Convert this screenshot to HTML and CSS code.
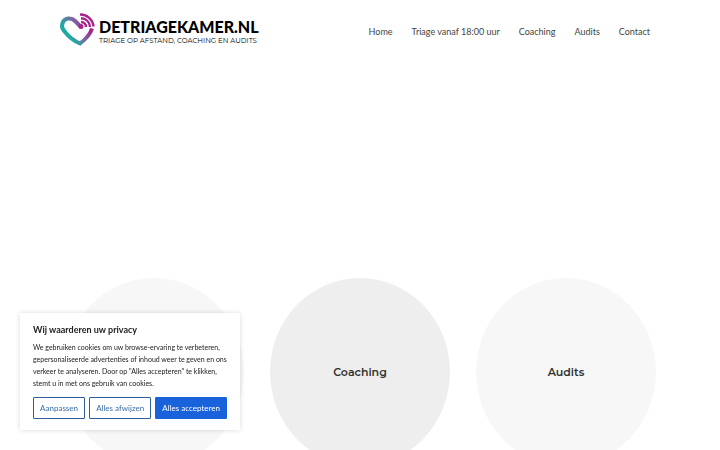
FILE: index.html
```html
<!DOCTYPE html>
<html lang="nl">
<head>
    <meta charset="UTF-8">
    <meta name="viewport" content="width=device-width, initial-scale=1.0">
    <title>Detriagekamer.nl</title>
    <link rel="stylesheet" href="styles.css">
</head>
<body>

    <header class="header">
        <a class="logo" href="#">
            <svg class="logo-icon" viewBox="0 0 40 38" aria-hidden="true">
                <defs>
                    <linearGradient id="heart" gradientUnits="userSpaceOnUse" x1="8" y1="30" x2="32" y2="14">
                        <stop offset="0.2" stop-color="#1fa9a5"/>
                        <stop offset="0.55" stop-color="#7a6ba3"/>
                        <stop offset="0.9" stop-color="#a3238e"/>
                    </linearGradient>
                </defs>
                <path fill="none" stroke="url(#heart)" stroke-width="4" d="M23 17L17 11C13 7 7 8 5 12C3 16 4 19 7 22C11 27 16 31 22 33.500C28 29 32 25 34 18.500"/>
                <g fill="none" stroke="#a8248a" stroke-width="2.400">
                    <path d="M23 12A5 5 0 0 1 28 17"/>
                    <path d="M23 8.200A9 9 0 0 1 32 17"/>
                    <path d="M22 4.500A13 13 0 0 1 35.500 16.500"/>
                </g>
                <circle cx="23" cy="16.500" r="2.500" fill="#a8248a"/>
            </svg>
            <span class="logo-text">
                <span class="logo-name">DETRIAGEKAMER.NL</span>
                <span class="logo-sub">TRIAGE OP AFSTAND, COACHING EN AUDITS</span>
            </span>
        </a>
        <nav class="menu">
            <a href="#">Home</a>
            <a href="#">Triage vanaf 18:00 uur</a>
            <a href="#">Coaching</a>
            <a href="#">Audits</a>
            <a href="#">Contact</a>
        </nav>
    </header>

    <main class="services">
        <a class="circle" href="#" aria-label="Triage"></a>
        <a class="circle circle-dark" href="#"><h2>Coaching</h2></a>
        <a class="circle" href="#"><h2>Audits</h2></a>
    </main>

    <section class="cookie" aria-labelledby="cookie-title">
        <h3 class="cookie-title" id="cookie-title">Wij waarderen uw privacy</h3>
        <p class="cookie-text">We gebruiken cookies om uw browse-ervaring te verbeteren, gepersonaliseerde advertenties of inhoud weer te geven en ons verkeer te analyseren. Door op "Alles accepteren" te klikken, stemt u in met ons gebruik van cookies.</p>
        <div class="cookie-buttons">
            <button class="btn" type="button">Aanpassen</button>
            <button class="btn" type="button">Alles afwijzen</button>
            <button class="btn btn-accept" type="button">Alles accepteren</button>
        </div>
    </section>

</body>
</html>
```
FILE: styles.css
```css
:root{
    --text-color: #444;
    --blue: #1863dc;
}

*{
    box-sizing: border-box;
}

body{
    display: flex;
    flex-direction: column;
    height: 100vh;
    margin: 0;
    background-color: white;
    color: var(--text-color);
    font-family: Lato, sans-serif;
}

h2,h3,p{
    margin: 0;
}

a{
    color: inherit;
    text-decoration: none;
}

.header{
    display: flex;
    justify-content: space-between;
    align-items: center;
    width: 100%;
    max-width: 600px;
    margin: 0 auto;
    padding: 10px 10px 0 0;
}

.logo{
    display: flex;
    color: black;
}

.logo-icon{
    width: 40px;
    height: 38px;
    margin-left: -2px;
}

.logo-text{
    display: flex;
    flex-direction: column;
    padding: 7px 0 0 1px;
    white-space: nowrap;
}

.logo-name{
    font-size: 16px;
    font-weight: 900;
    line-height: 20px;
}

.logo-sub{
    font-family: Montserrat, Lato, sans-serif;
    font-size: 7px;
    line-height: 7px;
}

.menu{
    display: flex;
    gap: 19px;
    padding-top: 5px;
    font-size: 9px;
    line-height: 20px;
    white-space: nowrap;
}

.services{
    display: grid;
    flex: 1;
    grid-template-columns: repeat(3, 1fr);
    gap: 26px;
    width: 100%;
    max-width: 592px;
    min-height: 0;
    margin: 0 auto;
    padding-top: 230px;
    overflow: hidden;
}

.circle{
    display: flex;
    align-items: center;
    justify-content: center;
    height: 188px;
    border-radius: 50%;
    background-color: #f7f7f7;
    color: #333;
}

.circle-dark{
    background-color: #eee;
}

.circle h2{
    font-family: Montserrat, "Open Sans", sans-serif;
    font-size: 11px;
    font-weight: 600;
}

.cookie{
    position: fixed;
    left: 20px;
    bottom: 20px;
    width: 220px;
    padding: 10px 13px 11px;
    background-color: white;
    color: #212121;
    box-shadow: 0 0 5px rgba(0,0,0,0.15);
}

.cookie-title{
    margin-bottom: 5px;
    font-size: 9px;
    font-weight: 700;
    line-height: 13px;
}

.cookie-text{
    font-size: 7px;
    line-height: 12px;
}

.cookie-buttons{
    display: flex;
    gap: 4px;
    margin-top: 8px;
}

.btn{
    flex: 1 1 auto;
    height: 22px;
    padding: 0;
    border: 1px solid #2d6098;
    border-radius: 1px;
    background-color: white;
    color: #3a6ea8;
    font-family: inherit;
    font-size: 8px;
    white-space: nowrap;
}

.btn-accept{
    border-color: var(--blue);
    background-color: var(--blue);
    color: white;
}
```
